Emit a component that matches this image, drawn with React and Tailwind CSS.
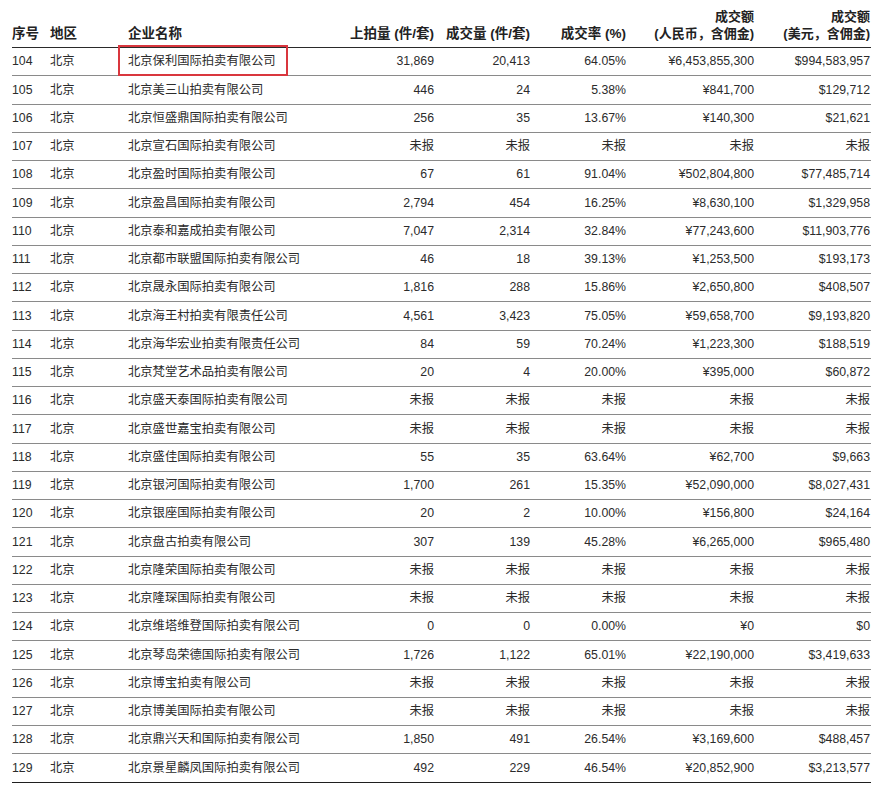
const rows = [
  ["104", "北京保利国际拍卖有限公司", "31,869", "20,413", "64.05%", "¥6,453,855,300", "$994,583,957"],
  ["105", "北京美三山拍卖有限公司", "446", "24", "5.38%", "¥841,700", "$129,712"],
  ["106", "北京恒盛鼎国际拍卖有限公司", "256", "35", "13.67%", "¥140,300", "$21,621"],
  ["107", "北京宣石国际拍卖有限公司", "未报", "未报", "未报", "未报", "未报"],
  ["108", "北京盈时国际拍卖有限公司", "67", "61", "91.04%", "¥502,804,800", "$77,485,714"],
  ["109", "北京盈昌国际拍卖有限公司", "2,794", "454", "16.25%", "¥8,630,100", "$1,329,958"],
  ["110", "北京泰和嘉成拍卖有限公司", "7,047", "2,314", "32.84%", "¥77,243,600", "$11,903,776"],
  ["111", "北京都市联盟国际拍卖有限公司", "46", "18", "39.13%", "¥1,253,500", "$193,173"],
  ["112", "北京晟永国际拍卖有限公司", "1,816", "288", "15.86%", "¥2,650,800", "$408,507"],
  ["113", "北京海王村拍卖有限责任公司", "4,561", "3,423", "75.05%", "¥59,658,700", "$9,193,820"],
  ["114", "北京海华宏业拍卖有限责任公司", "84", "59", "70.24%", "¥1,223,300", "$188,519"],
  ["115", "北京梵堂艺术品拍卖有限公司", "20", "4", "20.00%", "¥395,000", "$60,872"],
  ["116", "北京盛天泰国际拍卖有限公司", "未报", "未报", "未报", "未报", "未报"],
  ["117", "北京盛世嘉宝拍卖有限公司", "未报", "未报", "未报", "未报", "未报"],
  ["118", "北京盛佳国际拍卖有限公司", "55", "35", "63.64%", "¥62,700", "$9,663"],
  ["119", "北京银河国际拍卖有限公司", "1,700", "261", "15.35%", "¥52,090,000", "$8,027,431"],
  ["120", "北京银座国际拍卖有限公司", "20", "2", "10.00%", "¥156,800", "$24,164"],
  ["121", "北京盘古拍卖有限公司", "307", "139", "45.28%", "¥6,265,000", "$965,480"],
  ["122", "北京隆荣国际拍卖有限公司", "未报", "未报", "未报", "未报", "未报"],
  ["123", "北京隆琛国际拍卖有限公司", "未报", "未报", "未报", "未报", "未报"],
  ["124", "北京维塔维登国际拍卖有限公司", "0", "0", "0.00%", "¥0", "$0"],
  ["125", "北京琴岛荣德国际拍卖有限公司", "1,726", "1,122", "65.01%", "¥22,190,000", "$3,419,633"],
  ["126", "北京博宝拍卖有限公司", "未报", "未报", "未报", "未报", "未报"],
  ["127", "北京博美国际拍卖有限公司", "未报", "未报", "未报", "未报", "未报"],
  ["128", "北京鼎兴天和国际拍卖有限公司", "1,850", "491", "26.54%", "¥3,169,600", "$488,457"],
  ["129", "北京景星麟凤国际拍卖有限公司", "492", "229", "46.54%", "¥20,852,900", "$3,213,577"],
]

const font = { fontFamily: '"Liberation Sans", "Noto Sans CJK SC", sans-serif' }

export default function App() {
  return (
    <div className="w-[885px] h-[785px] bg-white pl-[12px]" style={font}>
      <div className="w-[859px]">
        <div className="flex items-end h-[48px] pb-[5px] border-b-[1.5px] border-[#2a2a2a] text-[13.5px] font-bold text-[#222] leading-[17px]">
          <div className="w-[38px]">序号</div>
          <div className="w-[78px]">地区</div>
          <div className="w-[196px]">企业名称</div>
          <div className="w-[110px] text-right">上拍量 (件/套)</div>
          <div className="w-[96px] text-right">成交量 (件/套)</div>
          <div className="w-[96px] text-right">成交率 (%)</div>
          <div className="w-[128px] text-right text-[13px]">
            成交额
            <br />
            (人民币，含佣金)
          </div>
          <div className="w-[116px] text-right text-[13px]">
            成交额
            <br />
            (美元，含佣金)
          </div>
        </div>
        {rows.map((r, i) => (
          <div
            key={r[0]}
            className={`relative flex items-center h-[28.25px] text-[12.3px] text-[#2b2b2b] ${
              i === rows.length - 1
                ? "border-b-[1.5px] border-[#1f1f1f]"
                : "border-b-[1.5px] border-[#8a8a8a]"
            }`}
          >
            <div className="w-[38px]">{r[0]}</div>
            <div className="w-[78px]">北京</div>
            <div className="w-[196px]">{r[1]}</div>
            <div className="w-[110px] text-right">{r[2]}</div>
            <div className="w-[96px] text-right">{r[3]}</div>
            <div className="w-[96px] text-right">{r[4]}</div>
            <div className="w-[128px] text-right">{r[5]}</div>
            <div className="w-[116px] text-right">{r[6]}</div>
            {i === 0 && (
              <div className="absolute left-[106px] top-[-3px] w-[170px] h-[31px] border-[2.5px] border-[#d9363e]" />
            )}
          </div>
        ))}
      </div>
    </div>
  )
}
